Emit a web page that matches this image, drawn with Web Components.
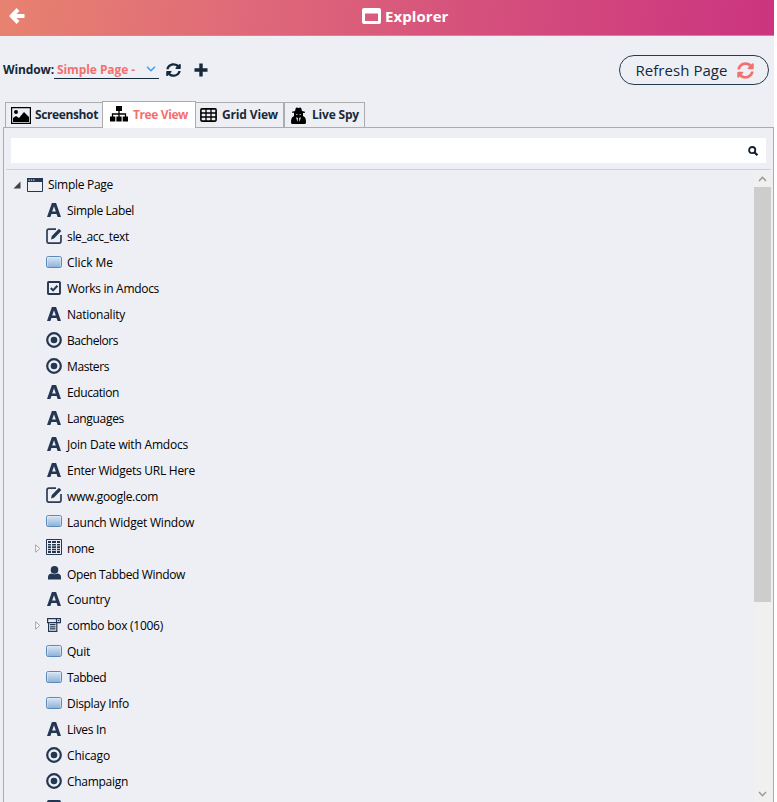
<!DOCTYPE html>
<html lang="en"><head><meta charset="utf-8"><title>Explorer</title>
<style>html,body{margin:0;background:#fff}body{width:777px;height:802px;overflow:hidden;font-family:"Open Sans","Noto Sans",sans-serif;font-size:12px;color:#000}</style></head>
<body><explorer-app></explorer-app>
<script>
const ICONS={
back:[16,16,'<path d="M9 1.500 2.800 8 9 14.500M3.500 8H15.500" fill="none" stroke="#fff" stroke-width="4"/>'],
win:[19,16,'<path fill-rule="evenodd" fill="#fff" d="M2 0h15q2 0 2 2v12q0 2-2 2H2q-2 0-2-2V2Q0 0 2 0zM3 5.5v7.5h13V5.5z"/>'],
refresh:[512,512,'<path fill="currentColor" d="M370.700 133.300C339.500 104 298.900 88 255.800 88c-77.500.1-144.300 53.200-162.800 126.900-1.300 5.400-6.100 9.100-11.700 9.100H24.100c-7.500 0-13.200-6.800-11.800-14.200C33.900 94.900 134.800 8 256 8c66.400 0 126.800 26.100 171.300 68.700L463 41c15.100-15.100 41-4.400 41 17v134c0 13.300-10.700 24-24 24H346c-21.400 0-32.100-25.900-17-41zM32 296h134c21.400 0 32.100 25.900 17 41l-41.800 41.800c31.300 29.300 71.800 45.300 114.900 45.200 77.400-.1 144.300-53.100 162.800-126.800 1.300-5.400 6.100-9.200 11.700-9.200h57.300c7.500 0 13.200 6.800 11.800 14.200C478.100 417.100 377.200 504 256 504c-66.400 0-126.800-26.100-171.300-68.700L49 471c-15.100 15.100-41 4.400-41-17V320c0-13.300 10.700-24 24-24z"/>'],
plus:[14,14,'<path d="M7 .5v13M.5 7h13" stroke="#14293a" stroke-width="3.400"/>'],
chev:[10,6,'<path d="m1 .7 4 4 4-4" fill="none" stroke="#35a0f4" stroke-width="1.5"/>'],
pic:[20,17,'<path fill="none" stroke="#000" stroke-width="1.2" d="M.6.6h18.800v15.800H.6z"/><circle cx="5" cy="5" r="2"/><path d="M2 15v-4l3-2 3 2 5-6 5 5v5z"/>'],
tree:[18,16,'<path d="M6 0h6v5H6zM0 10.500h5.300v5H0zM6.400 10.500h5.200v5H6.400zM12.700 10.500H18v5h-5.300z"/><path d="M9 4v7M2.500 11V8h13v3" fill="none" stroke="#000" stroke-width="1.300"/>'],
grid:[17,14,'<rect x=".9" y=".9" width="15.200" height="12.200" rx="1" fill="none" stroke="#000" stroke-width="1.600"/><path d="M1 5h15M1 9h15M6 1v12M11 1v12" stroke="#000" stroke-width="1.300"/>'],
spy:[15,17,'<path d="m4 4 .8-3Q5.500 0 7.500 1 9.500 0 10.200 1L11 4l3 .7v1L12 6v3l1.500 1Q15 11 15 15.500q0 1.500-1.500 1.500h-12Q0 17 0 15.500 0 11 1.500 10L3 9V5.700L1 5.700v-1z"/><path d="M5 10.300l2 .7-.5 4zm5 0L8 11l.5 4zM5 7.200h1.500v.8H5zm3.500 0H10v.8H8.500z" fill="#dde"/>'],
search:[10,10,'<circle cx="4.200" cy="4.100" r="3.100" fill="none" stroke="#10202d" stroke-width="1.800"/><path d="m6.400 6.200 3 3" stroke="#10202d" stroke-width="2.100"/>'],
up:[9,6,'<path d="m1 5 3.500-3.700L8 5" fill="none" stroke="#999" stroke-width="1.500"/>'],
down:[9,6,'<path d="m1 1 3.500 3.700L8 1" fill="none" stroke="#999" stroke-width="1.500"/>'],
open:[8,8,'<path d="M7.500.5v7h-7z" fill="#404040"/>'],
closed:[6,9,'<path d="m.7.800 4 3.700-4 3.700z" fill="#fff" stroke="#999" stroke-width=".9"/>'],
page:[16,14,'<path d="M.5.500h15v13H.5z" fill="none" stroke="#243752"/><path d="M0 0h16v4H0z" fill="#243752"/><path d="M1.500 1.500h1.300v1.200H1.500zm2.300 0h1.300v1.200H3.800zm2.300 0h1.300v1.200H6.100z" fill="#c7ccd8"/>'],
A:[14,14,'<path fill="#243752" fill-rule="evenodd" d="M4.900 0h4.200L14 14h-3.400l-1-3H4.400l-1 3H0zM5.200 8.500h3.600L7 3.300z"/>'],
edit:[16,16,'<path d="M10 1.200H3Q1 1.200 1 3.200v10Q1 15.200 3 15.200h10q2 0 2-2V7" fill="none" stroke="#2c3d55" stroke-width="1.700"/><path d="M5 11.500 5.800 8 13 .8l2.300 2.300L8 10.500z" fill="#243752"/>'],
btn:[16,12,'<defs><linearGradient id="g" x2="0" y2="1"><stop stop-color="#d9e8f7"/><stop offset="1" stop-color="#8cb0d9"/></linearGradient></defs><rect x=".5" y=".5" width="15" height="11" rx="1.800" fill="url(#g)" stroke="#5c88b6"/><path d="M1.500 10.500v-9h13v9" fill="none" stroke="#e4effb" stroke-opacity=".5"/>'],
check:[14,14,'<rect x="1" y="1" width="12" height="12" rx=".7" fill="none" stroke="#243752" stroke-width="1.900"/><path d="m3.800 7 2.300 2.400L10.400 4.800" fill="none" stroke="#243752" stroke-width="2"/>'],
radio:[16,16,'<circle cx="8" cy="8" r="6.800" fill="none" stroke="#243752" stroke-width="2.200"/><circle cx="8" cy="8" r="3.300" fill="#243752"/>'],
table:[16,16,'<path d="M.5.500h15v15H.5z" fill="#eeeff5" stroke="#243752"/><path d="M2 2h3v2H2zm4 0h4v2H6zm5 0h3v2h-3zM2 5h3v1.500H2zm4 0h4v1.500H6zm5 0h3v1.500h-3zM2 7.300h3v1.600H2zm4 0h4v1.600H6zm5 0h3v1.600h-3zM2 9.700h3v1.600H2zm4 0h4v1.600H6zm5 0h3v1.600h-3zM2 12.100h3V14H2zm4 0h4V14H6zm5 0h3V14h-3z" fill="#243752"/>'],
user:[13,14,'<circle cx="6.500" cy="3.900" r="3.800" fill="#243752"/><path d="M0 13.500v-2.300Q0 8 3.200 7.500q3.300 1.600 6.600 0Q13 8 13 11.200v2.300z" fill="#243752"/>'],
combo:[14,14,'<path d="M.6.600h12.800v4H.6z" fill="none" stroke="#243752" stroke-width="1.200"/><path d="M9.500.600v3.800M1.600 4.500v8.900h8.200V4.500M3 6.700h5.500M3 8.800h5.500M3 10.900h5.500" fill="none" stroke="#243752" stroke-width="1.200"/><path d="M10.500 2h2l-1 1.500z" fill="#243752"/>']
};
class UiIcon extends HTMLElement{connectedCallback(){const i=ICONS[this.getAttribute('name')],w=this.getAttribute('w')||i[0],h=this.getAttribute('h')||i[1];
this.attachShadow({mode:'open'}).innerHTML=`<style>:host{display:inline-flex;flex:none}svg{display:block}</style><svg width="${w}" height="${h}" viewBox="0 0 ${i[0]} ${i[1]}" preserveAspectRatio="none">${i[2]}</svg>`}}
customElements.define('ui-icon',UiIcon);
/* Label whose letter spacing is tuned to occupy a given width */
class FitText extends HTMLElement{connectedCallback(){this.attachShadow({mode:'open'}).innerHTML='<style>:host{display:inline-block;white-space:nowrap;flex:none}</style><slot></slot>';
const w=+this.getAttribute('w');if(w){const n=this.textContent.length,m=this.getBoundingClientRect().width;this.style.letterSpacing=((w-m)/n)+'px'}}}
customElements.define('fit-text',FitText);
class TreeRow extends HTMLElement{connectedCallback(){const root=this.hasAttribute('root'),ex=this.hasAttribute('expandable');
this.attachShadow({mode:'open'}).innerHTML=`<style>:host{display:flex;align-items:center;height:25.940px;padding-left:${root?7:29}px}.t{width:${root?14:11}px;display:flex;flex:none}.i{width:16px;display:flex;justify-content:center;flex:none;margin-right:5px;padding-bottom:${root?0:1.5}px}</style>
<span class="t">${root?'<ui-icon name="open"></ui-icon>':ex?'<ui-icon name="closed"></ui-icon>':''}</span><span class="i"><ui-icon name="${this.getAttribute('icon')}"></ui-icon></span><fit-text w="${this.getAttribute('w')}">${this.getAttribute('label')}</fit-text>`}}
customElements.define('tree-row',TreeRow);
class TabItem extends HTMLElement{connectedCallback(){const a=this.hasAttribute('active');
this.attachShadow({mode:'open'}).innerHTML=`<style>:host{display:flex;box-sizing:border-box;align-items:center;height:${a?27:26}px;border:1px solid #acacac;border-bottom:0;font-weight:700;color:${a?'#f4706e':'#172a39'};background:${a?'#fff':'#eeeff5'};padding-bottom:${a?2:1}px}::slotted(fit-text){padding-bottom:${a?0:1}px}</style><slot></slot>`}}
customElements.define('tab-item',TabItem);
class AppHeader extends HTMLElement{connectedCallback(){this.attachShadow({mode:'open'}).innerHTML=`<style>:host{display:grid;grid-template-columns:362px auto 1fr;align-items:center;height:36px;box-sizing:border-box;background:linear-gradient(100deg,#e8826f 0%,#df6a79 31%,#d5507c 62%,#cb3480 100%);border-bottom:1px solid #e48080;color:#fff;font-weight:700;font-size:15px;padding-bottom:3px}.b{padding-left:8.500px;display:flex}.t{display:flex;align-items:center;gap:4px}</style><span class="b"><ui-icon name="back"></ui-icon></span><span class="t"><ui-icon name="win"></ui-icon><fit-text w="63.5">Explorer</fit-text></span>`}}
customElements.define('app-header',AppHeader);
class AppToolbar extends HTMLElement{connectedCallback(){this.attachShadow({mode:'open'}).innerHTML=`<style>:host{display:flex;height:66px;box-sizing:border-box;padding:17px 5px 0 3px;align-items:flex-start;color:#14293a}
.l{display:flex;align-items:center;height:33px;font-weight:700}.s{box-sizing:border-box;display:flex;align-items:center;justify-content:space-between;width:105px;height:19px;border-bottom:1px solid #14293a;color:#f4706e;padding:0 3px;margin-right:7px}
.l ui-icon[name=plus]{margin-left:13px}
.r{margin-left:auto;margin-top:2px;box-sizing:border-box;width:150px;height:30px;border:1px solid #253b49;border-radius:15px;display:flex;align-items:center;justify-content:space-between;padding:0 14px 0 15.500px;font-size:15px}.r ui-icon{color:#f4706e}</style>
<div class="l"><fit-text w="51">Window:</fit-text><span class="s"><fit-text w="78">Simple Page -</fit-text><ui-icon name="chev"></ui-icon></span><ui-icon name="refresh" w="15" h="14"></ui-icon><ui-icon name="plus"></ui-icon></div>
<div class="r"><fit-text w="92">Refresh Page</fit-text><ui-icon name="refresh" w="17" h="17"></ui-icon></div>`}}
customElements.define('app-toolbar',AppToolbar);
class ScrollRail extends HTMLElement{connectedCallback(){this.attachShadow({mode:'open'}).innerHTML=`<style>:host{display:flex;flex-direction:column;align-items:center;width:17px;background:#f0f0f0;flex:none;box-sizing:border-box;padding:6px 0 5px}.t{width:100%;height:415px;background:#cdcdcd;margin-top:5px}ui-icon[name=down]{margin-top:auto}</style><ui-icon name="up"></ui-icon><div class="t"></div><ui-icon name="down"></ui-icon>`}}
customElements.define('scroll-rail',ScrollRail);
const ROWS=[['A','Simple Label',67],['edit','sle_acc_text',62],['btn','Click Me',46],['check','Works in Amdocs',92],['A','Nationality',58],['radio','Bachelors',51],['radio','Masters',42],['A','Education',52],['A','Languages',57],['A','Join Date with Amdocs',121],['A','Enter Widgets URL Here',128],['edit','www.google.com',91],['btn','Launch Widget Window',127],['table','none',27,1],['user','Open Tabbed Window',118],['A','Country',43],['combo','combo box (1006)',96,1],['btn','Quit',23],['btn','Tabbed',39],['btn','Display Info',62],['A','Lives In',39],['radio','Chicago',43],['radio','Champaign',61],['check','',0]];
class ExplorerApp extends HTMLElement{connectedCallback(){this.attachShadow({mode:'open'}).innerHTML=`<style>:host{display:flex;flex-direction:column;width:774px;height:802px;overflow:hidden;background:#eeeff5}
.tabs{display:flex;align-items:flex-end;padding-left:5px;height:27px;margin-bottom:-1px;margin-top:-1px;z-index:1}
.panel{box-sizing:border-box;border:1px solid #acacac;border-bottom:0;margin:0 0 0 3px;flex:1;min-height:0;display:flex;flex-direction:column}
.q{box-sizing:border-box;height:25px;background:#fff;margin:10px 7px 6px;display:flex;align-items:center;justify-content:flex-end;padding-right:8px;flex:none}
.body{border-top:1px solid #d0d0d3;margin:0 2px;display:flex;flex:1;min-height:0;overflow:hidden}.tree{flex:1;padding-top:2px}
tab-item:not([active]){clip-path:inset(0 0 1px 0)}
tab-item:nth-child(1){width:97px;padding-left:5px;gap:4px;border-right:0}tab-item:nth-child(2){width:94px;padding-left:7px;gap:5px}tab-item:nth-child(3){width:88px;padding-left:4px;gap:5px;border-left:0}tab-item:nth-child(4){width:81px;padding-left:6px;gap:6px}</style>
<app-header></app-header><app-toolbar></app-toolbar>
<div class="tabs"><tab-item><ui-icon name="pic"></ui-icon><fit-text w="63">Screenshot</fit-text></tab-item><tab-item active><ui-icon name="tree"></ui-icon><fit-text w="55">Tree View</fit-text></tab-item><tab-item><ui-icon name="grid"></ui-icon><fit-text w="56">Grid View</fit-text></tab-item><tab-item><ui-icon name="spy"></ui-icon><fit-text w="47">Live Spy</fit-text></tab-item></div>
<div class="panel"><div class="q"><ui-icon name="search"></ui-icon></div><div class="body"><div class="tree"><tree-row root icon="page" label="Simple Page" w="65"></tree-row>${ROWS.map(r=>`<tree-row icon="${r[0]}" label="${r[1]}" w="${r[2]}" ${r[3]?'expandable':''}></tree-row>`).join('')}</div><scroll-rail></scroll-rail></div></div>`}}
customElements.define('explorer-app',ExplorerApp);
</script></body></html>
